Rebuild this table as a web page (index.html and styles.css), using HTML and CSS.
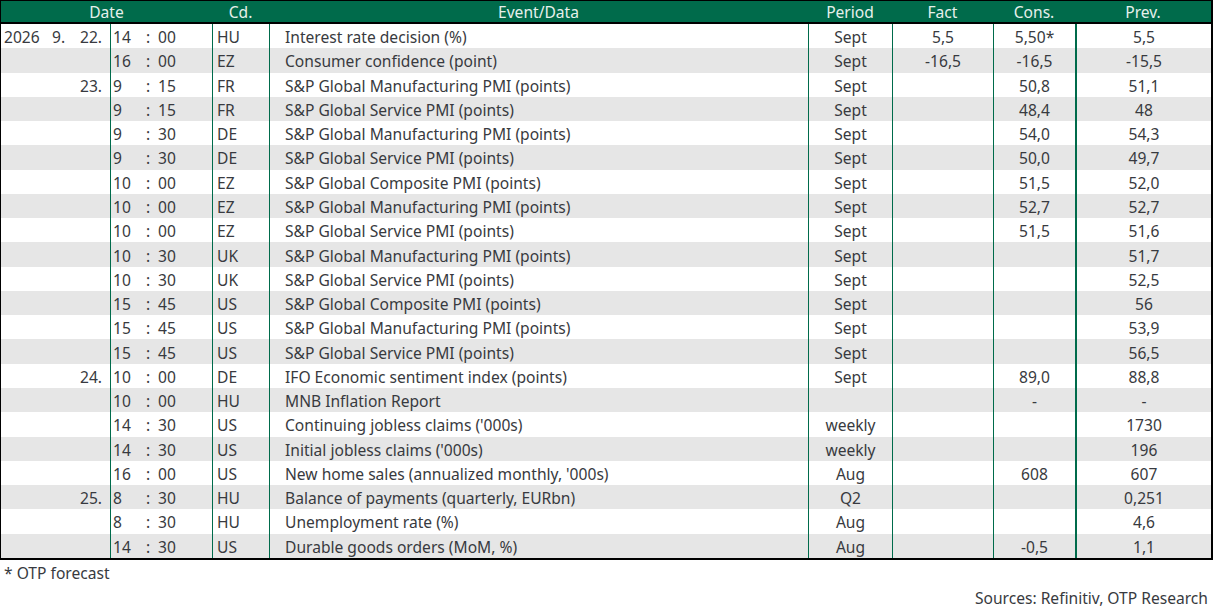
FILE: index.html
```html
<!DOCTYPE html>
<html>
<head>
<meta charset="utf-8">
<link rel="stylesheet" href="styles.css">
</head>
<body>
<div class="tbl">
  <div class="head">
    <div class="h h-date">Date</div>
    <div class="h">Cd.</div>
    <div class="h">Event/Data</div>
    <div class="h">Period</div>
    <div class="h">Fact</div>
    <div class="h">Cons.</div>
    <div class="h">Prev.</div>
  </div>
  <div id="body"></div>
</div>
<div class="note">* OTP forecast</div>
<div class="src">Sources: Refinitiv, OTP Research</div>
<script src="app.js"></script>
</body>
</html>
```
FILE: app.js
```js
const rows = [
  ["2026","9.","22.","14","00","HU","Interest rate decision (%)","Sept","5,5","5,50*","5,5"],
  ["","","","16","00","EZ","Consumer confidence (point)","Sept","-16,5","-16,5","-15,5"],
  ["","","23.","9","15","FR","S&P Global Manufacturing PMI (points)","Sept","","50,8","51,1"],
  ["","","","9","15","FR","S&P Global Service PMI (points)","Sept","","48,4","48"],
  ["","","","9","30","DE","S&P Global Manufacturing PMI (points)","Sept","","54,0","54,3"],
  ["","","","9","30","DE","S&P Global Service PMI (points)","Sept","","50,0","49,7"],
  ["","","","10","00","EZ","S&P Global Composite PMI (points)","Sept","","51,5","52,0"],
  ["","","","10","00","EZ","S&P Global Manufacturing PMI (points)","Sept","","52,7","52,7"],
  ["","","","10","00","EZ","S&P Global Service PMI (points)","Sept","","51,5","51,6"],
  ["","","","10","30","UK","S&P Global Manufacturing PMI (points)","Sept","","","51,7"],
  ["","","","10","30","UK","S&P Global Service PMI (points)","Sept","","","52,5"],
  ["","","","15","45","US","S&P Global Composite PMI (points)","Sept","","","56"],
  ["","","","15","45","US","S&P Global Manufacturing PMI (points)","Sept","","","53,9"],
  ["","","","15","45","US","S&P Global Service PMI (points)","Sept","","","56,5"],
  ["","","24.","10","00","DE","IFO Economic sentiment index (points)","Sept","","89,0","88,8"],
  ["","","","10","00","HU","MNB Inflation Report","","","-","-"],
  ["","","","14","30","US","Continuing jobless claims ('000s)","weekly","","","1730"],
  ["","","","14","30","US","Initial jobless claims ('000s)","weekly","","","196"],
  ["","","","16","00","US","New home sales (annualized monthly, '000s)","Aug","","608","607"],
  ["","","25.","8","30","HU","Balance of payments (quarterly, EURbn)","Q2","","","0,251"],
  ["","","","8","30","HU","Unemployment rate (%)","Aug","","","4,6"],
  ["","","","14","30","US","Durable goods orders (MoM, %)","Aug","","-0,5","1,1"]
];
const body = document.getElementById("body");
rows.forEach((r, i) => {
  const row = document.createElement("div");
  row.className = "row" + (i % 2 ? " alt" : "");
  const mk = (cls, html) => {
    const d = document.createElement("div");
    d.className = "c " + cls;
    if (typeof html === "string") d.textContent = html; else d.append(...html);
    row.appendChild(d);
    return d;
  };
  const span = (cls, t) => { const s = document.createElement("span"); s.className = cls; s.textContent = t; return s; };
  mk("c-date", [span("y", r[0]), span("m", r[1]), span("d", r[2])]);
  mk("c-time", [span("hh", r[3]), span("col", ":"), span("mm", r[4])]);
  mk("c-cd", r[5]);
  mk("c-ev", r[6]);
  mk("c-num", r[7]);
  mk("c-num", r[8]);
  mk("c-num", r[9]);
  mk("c-num c-prev", r[10]);
  body.appendChild(row);
});
```
FILE: styles.css
```css
* { box-sizing: border-box; }
html, body { margin: 0; padding: 0; background: #fff; }
body {
  font-family: "Noto Sans", "Open Sans", sans-serif;
  font-size: 15.6px;
  color: #383a40;
  width: 1214px;
}
.tbl {
  width: 1213px;
  border-top: 1px solid #000;
  border-left: 1px solid #000;
  border-right: 2px solid #000;
  border-bottom: 2px solid #000;
}
.head {
  display: grid;
  grid-template-columns: 211px 57px 539px 84px 101px 82px 136px;
  height: 23px;
  background: #006b4b;
  border-bottom: 2px solid #000;
  color: #e6f0eb;
}
.h { text-align: center; line-height: 22px; }
.row {
  display: grid;
  grid-template-columns: 109px 102px 57px 539px 84px 101px 82px 136px;
  height: 24.27px;
}
.row.alt { background: #e6e6e6; }
.c {
  display: flex;
  align-items: center;
  padding-top: 2px;
  border-left: 1px solid #006b4b;
  white-space: nowrap;
  overflow: hidden;
}
.c-date { border-left: none; padding-left: 3px; padding-right: 8px; }
.c-date .y { width: 48px; }
.c-date .m { width: 20px; }
.c-date .d { flex: 1; text-align: right; }
.c-time { padding-left: 2px; }
.c-time .hh { width: 33px; }
.c-time .col { width: 12px; }
.c-cd { padding-left: 4px; }
.c-ev { padding-left: 15px; }
.c-num { justify-content: center; }
.c-prev { border-left-width: 2px; }
.note { padding: 3px 0 0 4px; line-height: 20px; }
.src { text-align: right; padding-right: 6px; line-height: 20px; margin-top: 5px; }
```
